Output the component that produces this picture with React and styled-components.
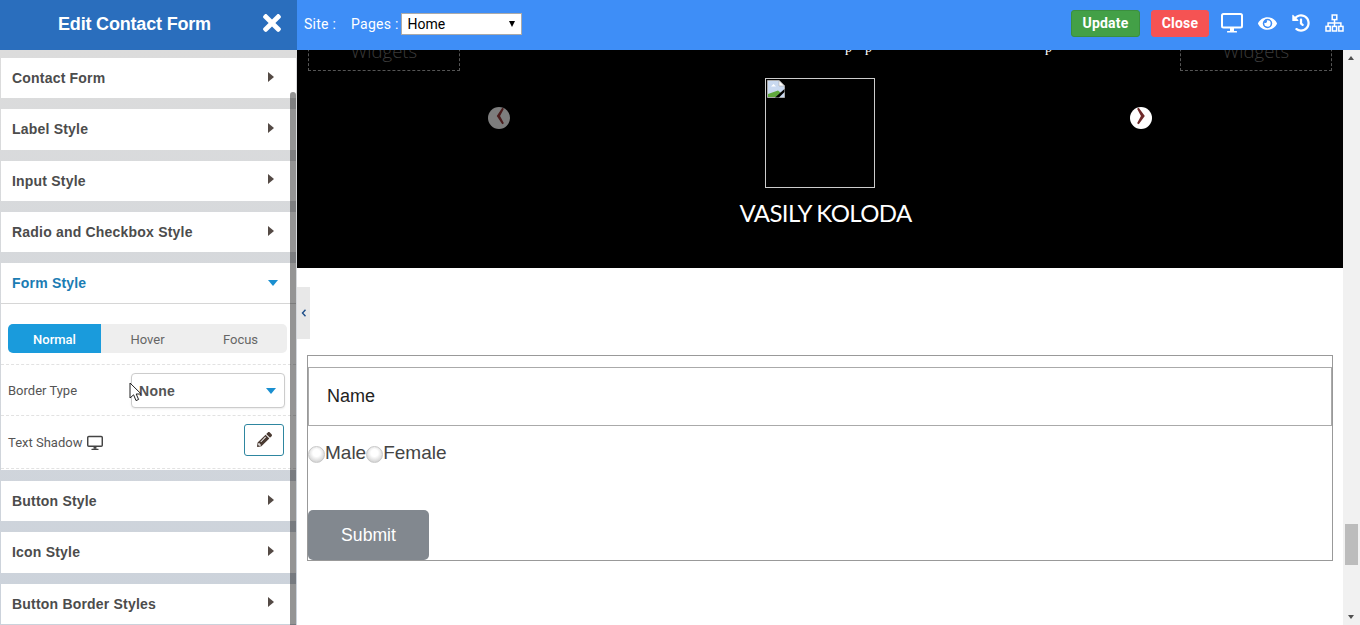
import React from 'react';
import styled, {createGlobalStyle} from 'styled-components';
import {FaEye, FaHistory, FaPencilAlt, FaTimes} from 'react-icons/fa';

const GlobalStyle = createGlobalStyle`
  html, body {
    margin: 0;
    padding: 0;
    height: 100%;
    overflow: hidden;
    background: #fff;
    font-family: "Liberation Sans", Arial, sans-serif;
  }
  * {
    box-sizing: border-box;
  }
`;

const DesktopIcon = ({size}) => (
  <svg width={size} height={size} viewBox="0 0 22 20" fill="none">
    <rect x="1" y="1" width="20" height="13.5" rx="1.5" stroke="currentColor" strokeWidth="2" />
    <rect x="9" y="15" width="4" height="3" fill="currentColor" />
    <rect x="6" y="18" width="10" height="1.6" rx="0.6" fill="currentColor" />
  </svg>
);

const SitemapIcon = () => (
  <svg width="19" height="18" viewBox="0 0 19 18" fill="none" stroke="currentColor" strokeWidth="1.5">
    <rect x="7.2" y="1" width="4.6" height="4.6" />
    <rect x="1" y="12.4" width="4.2" height="4.6" />
    <rect x="7.4" y="12.4" width="4.2" height="4.6" />
    <rect x="13.8" y="12.4" width="4.2" height="4.6" />
    <path d="M9.5 5.6V12.4M3.1 12.4V9H15.9V12.4" />
  </svg>
);

const BrokenImageIcon = () => (
  <svg width="18" height="18" viewBox="0 0 18 18">
    <path d="M0.5 0.5H12L17.5 6V17.5H0.5Z" fill="#c9d9f0" stroke="#a9a9a9" />
    <path d="M12 0.5V6H17.5Z" fill="#fff" stroke="#a9a9a9" strokeWidth="0.6" />
    <path d="M4 6.5L6.5 4L9 6.5Z" fill="#fff" />
    <path d="M1 17V14L11 10.5L14 13L10 17Z" fill="#5fa83c" />
    <path d="M8 17.5L17.5 9V12L12 17.5Z" fill="#000" />
  </svg>
);

const CursorIcon = () => (
  <svg width="14" height="21" viewBox="0 0 14 21">
    <path d="M1 1V16L4.6 12.8L7 18.6L9.6 17.5L7.2 12H12.2Z" fill="#fff" stroke="#222" strokeWidth="1" />
  </svg>
);

const SECTIONS_TOP = ['Contact Form', 'Label Style', 'Input Style', 'Radio and Checkbox Style'];
const SECTIONS_BOTTOM = ['Button Style', 'Icon Style', 'Button Border Styles'];

const App = () => {
  return (
    <>
      <GlobalStyle />
      <Page>
        <Sidebar>
          <SidebarHeader>
            <SidebarTitle>Edit Contact Form</SidebarTitle>
            <CloseIcon>
              <FaTimes size={26} />
            </CloseIcon>
          </SidebarHeader>
          <SidebarBody>
            {SECTIONS_TOP.map(name => (
              <Section key={name}>
                <SectionHead>
                  {name}
                  <ArrowRight />
                </SectionHead>
              </Section>
            ))}
            <Section>
              <SectionHead $open>
                Form Style
                <ArrowDown />
              </SectionHead>
              <SectionContent>
                <Tabs>
                  <Tab $active>Normal</Tab>
                  <Tab>Hover</Tab>
                  <Tab>Focus</Tab>
                </Tabs>
                <OptionRow>
                  <OptionLabel>Border Type</OptionLabel>
                  <SelectBox>
                    None
                    <ArrowDown />
                  </SelectBox>
                  <Cursor>
                    <CursorIcon />
                  </Cursor>
                </OptionRow>
                <OptionRow $tall>
                  <OptionLabel $tall>
                    Text Shadow
                    <DesktopIcon size={16} />
                  </OptionLabel>
                  <EditButton>
                    <FaPencilAlt size={15} />
                  </EditButton>
                </OptionRow>
              </SectionContent>
            </Section>
            {SECTIONS_BOTTOM.map(name => (
              <Section key={name}>
                <SectionHead>
                  {name}
                  <ArrowRight />
                </SectionHead>
              </Section>
            ))}
          </SidebarBody>
          <SidebarScrollThumb />
        </Sidebar>

        <Main>
          <TopBar>
            <TopLabel>Site :</TopLabel>
            <TopLabel $pages>Pages :</TopLabel>
            <PageSelect>
              <select defaultValue="Home">
                <option>Home</option>
              </select>
            </PageSelect>
            <TopActions>
              <ActionButton $color="#43a047" $border="#3b8f3f" $width="69px">Update</ActionButton>
              <ActionButton $color="#f55353" $border="#f55353" $width="58px">Close</ActionButton>
              <TopIcons>
                <DesktopIcon size={22} />
                <FaEye size={19} />
                <FaHistory size={18} />
                <SitemapIcon />
              </TopIcons>
            </TopActions>
          </TopBar>

          <Viewport>
            <ScrollArea>
              <Hero>
                <WidgetBox>Widgets</WidgetBox>
                <Slider>
                  <Quote>
                    <span>p</span>
                    <span>p</span>
                    <span>p</span>
                  </Quote>
                  <Photo>
                    <BrokenImageIcon />
                  </Photo>
                  <PersonName>VASILY KOLODA</PersonName>
                  <SlideArrow $side="left" $dim>
                    <svg width="11" height="18" viewBox="0 0 10 16">
                      <path d="M7.5 0.5L2.5 8L7.5 15.5L9 14.5L5.5 8L9 1.5Z" fill="#4a1c1c" />
                    </svg>
                  </SlideArrow>
                  <SlideArrow $side="right">
                    <svg width="11" height="18" viewBox="0 0 10 16">
                      <path d="M2.5 0.5L8 8L2.5 15.5L1 14.5L4.5 8L1 1.5Z" fill="#6e2a2a" />
                    </svg>
                  </SlideArrow>
                </Slider>
                <WidgetBox>Widgets</WidgetBox>
              </Hero>
              <ContactForm>
                <NameInput placeholder="Name" />
                <RadioRow>
                  <Radio type="radio" name="gender" />
                  Male
                  <Radio type="radio" name="gender" />
                  Female
                </RadioRow>
                <SubmitButton>Submit</SubmitButton>
              </ContactForm>
            </ScrollArea>
            <PageScrollbar>
              <ScrollUp />
              <ScrollThumb />
              <ScrollDown />
            </PageScrollbar>
            <CollapseTab>
              <svg width="6" height="8" viewBox="0 0 6 8">
                <path d="M4.5 0.8L1.5 4L4.5 7.2" fill="none" stroke="#1f4f8a" strokeWidth="1.4" />
              </svg>
            </CollapseTab>
          </Viewport>
        </Main>
      </Page>
    </>
  );
};

const Page = styled.div`
  display: flex;
  width: 1360px;
  height: 625px;
  overflow: hidden;
`;

const Sidebar = styled.aside`
  position: relative;
  display: flex;
  flex-direction: column;
  flex: 0 0 297px;
  height: 625px;
  overflow: hidden;
`;

const SidebarHeader = styled.div`
  position: relative;
  display: flex;
  align-items: center;
  flex: 0 0 50px;
  padding-bottom: 2px;
  background: #2a6ebd;
  color: #fff;
`;

const SidebarTitle = styled.h1`
  margin: 0;
  padding-left: 58px;
  font-size: 18px;
  font-weight: 700;
  letter-spacing: -0.18px;
`;

const CloseIcon = styled.span`
  position: absolute;
  display: flex;
  top: 10px;
  left: 259px;
`;

const SidebarBody = styled.div`
  display: flex;
  flex-direction: column;
  flex: 1;
  gap: 11px;
  padding: 8px 1px 0;
  background: linear-gradient(180deg, #dcdcdc 0%, #cbd2db 100%);
`;

const Section = styled.section`
  background: #fff;
  flex: none;
`;

const SectionHead = styled.div`
  display: flex;
  align-items: center;
  justify-content: space-between;
  height: 40.33px;
  padding: 0 21px 0 11px;
  font-size: 14px;
  font-weight: 700;
  letter-spacing: 0.2px;
  color: ${props => (props.$open ? '#1b7cb3' : '#4c4c4c')};
  border-bottom: ${props => (props.$open ? '1px solid #d6d6d6' : 'none')};
`;

const ArrowRight = styled.span`
  width: 0;
  height: 0;
  margin: -3px 1px 0 0;
  border-top: 5px solid transparent;
  border-bottom: 5px solid transparent;
  border-left: 6px solid #544a45;
`;

const ArrowDown = styled.span`
  width: 0;
  height: 0;
  margin: 0 -3px 0 0;
  border-left: 5px solid transparent;
  border-right: 5px solid transparent;
  border-top: 6px solid #1a8fd0;
`;

const SectionContent = styled.div`
  padding: 20px 0 0;
  height: 166.34px;
`;

const Tabs = styled.div`
  display: grid;
  grid-template-columns: repeat(3, 93px);
  margin: 0 9px 11px 7px;
  height: 29px;
  border-radius: 5px;
  background: #eee;
  overflow: hidden;
`;

const Tab = styled.div`
  display: flex;
  align-items: center;
  justify-content: center;
  padding-top: 2px;
  font-family: Roboto, sans-serif;
  font-size: 13px;
  font-weight: ${props => (props.$active ? 500 : 400)};
  color: ${props => (props.$active ? '#fff' : '#666')};
  background: ${props => (props.$active ? '#1a9bdc' : 'transparent')};
`;

const OptionRow = styled.div`
  position: relative;
  display: flex;
  align-items: center;
  justify-content: space-between;
  height: ${props => (props.$tall ? '54px' : '51px')};
  padding: ${props => (props.$tall ? '0 11px 0 7px' : '2px 11px 0 7px')};
  border-top: 1px dashed #e2e2e2;
  border-bottom: ${props => (props.$tall ? '1px dashed #e2e2e2' : 'none')};
`;

const OptionLabel = styled.span`
  display: flex;
  align-items: center;
  gap: 5px;
  margin-top: ${props => (props.$tall ? '2px' : '0')};
  font-family: Roboto, sans-serif;
  font-size: 13px;
  color: #555;

  svg {
    color: #444;
  }
`;

const SelectBox = styled.div`
  display: flex;
  align-items: center;
  justify-content: space-between;
  width: 154px;
  height: 35px;
  padding: 0 11px 0 7px;
  font-size: 14px;
  font-weight: 700;
  letter-spacing: 0.3px;
  color: #555;
  background: #fff;
  border: 1px solid #ccc;
  border-radius: 4px;
  box-shadow: 0 1px 2px rgba(0, 0, 0, 0.08);
`;

const Cursor = styled.span`
  position: absolute;
  display: flex;
  left: 128px;
  top: 17px;
`;

const EditButton = styled.button`
  display: flex;
  align-items: center;
  justify-content: center;
  width: 40px;
  height: 32px;
  margin: -4px 1px 0 0;
  padding: 0;
  color: #4a3a32;
  background: #fff;
  border: 1px solid #2e86a0;
  border-radius: 3px;
`;

const SidebarScrollThumb = styled.div`
  position: absolute;
  top: 92px;
  bottom: 0;
  left: 290px;
  width: 6px;
  border-radius: 3px 3px 0 0;
  background: rgba(0, 0, 0, 0.42);
`;

const Main = styled.main`
  display: flex;
  flex-direction: column;
  flex: 1;
  min-width: 0;
`;

const TopBar = styled.header`
  position: relative;
  z-index: 2;
  display: flex;
  align-items: center;
  flex: 0 0 50px;
  padding: 0 16px 4px 7px;
  background: #3e8ef7;
  color: #fff;
`;

const TopLabel = styled.span`
  margin-top: 2px;
  margin-left: ${props => (props.$pages ? '15px' : '0')};
  margin-right: ${props => (props.$pages ? '2px' : '0')};
  font-family: Roboto, sans-serif;
  font-size: 14px;
  letter-spacing: 0.25px;
`;

const PageSelect = styled.div`
  position: relative;
  width: 121px;
  height: 22px;
  margin-top: 2px;

  select {
    width: 100%;
    height: 100%;
    padding: 0 0 0 6px;
    font-family: Roboto, sans-serif;
    font-size: 14px;
    color: #000;
    background: #fff;
    border: 1px solid #aaa;
    border-radius: 0;
    appearance: none;
  }

  &::after {
    content: '';
    position: absolute;
    top: 8px;
    right: 7px;
    border-left: 3.5px solid transparent;
    border-right: 3.5px solid transparent;
    border-top: 6px solid #000;
  }
`;

const TopActions = styled.div`
  display: flex;
  align-items: center;
  margin-left: auto;
  gap: 11px;
`;

const ActionButton = styled.button`
  width: ${props => props.$width};
  height: 27px;
  padding: 0;
  font-family: Roboto, sans-serif;
  font-size: 14px;
  font-weight: 700;
  letter-spacing: 0.2px;
  color: #fff;
  background: ${props => props.$color};
  border: 1px solid ${props => props.$border};
  border-radius: 3px;
`;

const TopIcons = styled.div`
  display: flex;
  align-items: center;
  gap: 15px;
  margin-left: 1px;
  color: #fff;
`;

const Viewport = styled.div`
  position: relative;
  display: flex;
  flex: 1;
  min-height: 0;
  overflow: hidden;
`;

const ScrollArea = styled.div`
  flex: 1;
  min-width: 0;
  margin-top: -80px;
`;

const Hero = styled.div`
  display: grid;
  grid-template-columns: 152px 1fr 152px;
  align-items: start;
  height: 298px;
  padding: 0 11px;
  background: #000;
`;

const WidgetBox = styled.div`
  display: flex;
  align-items: flex-end;
  justify-content: center;
  height: 101px;
  padding-bottom: 7px;
  font-family: "Open Sans", sans-serif;
  font-size: 18.5px;
  font-weight: 300;
  color: #3b3b3b;
  border: 1px dashed #555;
`;

const Slider = styled.div`
  position: relative;
  display: flex;
  flex-direction: column;
  align-items: center;
  padding-top: 66px;
`;

const Quote = styled.div`
  display: flex;
  align-self: flex-start;
  height: 24px;
  margin: 0 0 18px 385px;
  font-family: "Liberation Serif", serif;
  font-size: 14px;
  line-height: 24px;
  color: #fff;

  span + span {
    margin-left: 13px;
  }

  span:last-child {
    margin-left: 173px;
  }
`;

const Photo = styled.div`
  width: 110px;
  height: 110px;
  padding: 1px;
  border: 1px solid #ccc;
`;

const PersonName = styled.h2`
  margin: 7px 0 0 11px;
  font-family: Lato, sans-serif;
  font-size: 24px;
  font-weight: 400;
  line-height: 36px;
  letter-spacing: -0.6px;
  color: #fff;
`;

const SlideArrow = styled.span`
  position: absolute;
  top: 137px;
  ${props => props.$side}: 28px;
  display: flex;
  align-items: flex-start;
  justify-content: center;
  width: 22px;
  height: 22px;
  border-radius: 50%;
  background: ${props => (props.$dim ? '#7d7d7d' : '#fff')};
`;

const ContactForm = styled.form`
  display: flex;
  flex-direction: column;
  align-items: flex-start;
  height: 206px;
  margin: 87px 10px 0;
  padding: 11px 0 0;
  border: 1px solid #999;
`;

const NameInput = styled.input`
  width: 100%;
  height: 59px;
  padding: 0 18px;
  font-family: "Liberation Sans", Arial, sans-serif;
  font-size: 18px;
  background: #fff;
  border: 1px solid #aaa;
  outline: none;

  &::placeholder {
    color: #222;
    opacity: 1;
  }
`;

const RadioRow = styled.div`
  display: flex;
  align-items: center;
  height: 24px;
  margin-top: 15px;
  font-size: 19px;
  color: #444;
`;

const Radio = styled.input`
  appearance: none;
  width: 17px;
  height: 17px;
  margin: 3px 0 0;
  border: 1px solid #c8c8c8;
  border-radius: 50%;
  background: radial-gradient(circle at 50% 40%, #fff 30%, #ccc 85%);
`;

const SubmitButton = styled.button`
  width: 121px;
  height: 50px;
  margin-top: 45px;
  padding: 0;
  font-family: "Liberation Sans", Arial, sans-serif;
  font-size: 17.6px;
  color: #fff;
  background: #82888f;
  border: none;
  border-radius: 5px;
`;

const PageScrollbar = styled.div`
  position: relative;
  flex: 0 0 17px;
  background: #f1f1f1;
`;

const ScrollUp = styled.span`
  position: absolute;
  top: 6px;
  left: 5px;
  border-left: 3.5px solid transparent;
  border-right: 3.5px solid transparent;
  border-bottom: 4px solid #505050;
`;

const ScrollDown = styled.span`
  position: absolute;
  bottom: 6px;
  left: 5px;
  border-left: 3.5px solid transparent;
  border-right: 3.5px solid transparent;
  border-top: 4px solid #505050;
`;

const ScrollThumb = styled.span`
  position: absolute;
  top: 474px;
  left: 2px;
  width: 13px;
  height: 41px;
  background: #bcbcbc;
`;

const CollapseTab = styled.span`
  position: absolute;
  top: 237px;
  left: 0;
  display: flex;
  align-items: center;
  justify-content: center;
  width: 13px;
  height: 52px;
  background: #e8e8e8;
`;

export default App;
